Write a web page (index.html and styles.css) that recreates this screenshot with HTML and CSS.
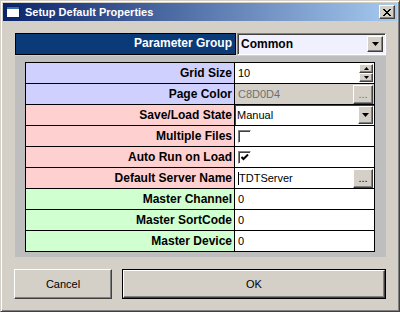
FILE: index.html
```html
<!doctype html>
<html lang="en">
<head>
    <meta charset="utf-8">
    <title>Setup Default Properties</title>
    <link rel="stylesheet" href="styles.css">
</head>
<body>
    <div class="window">
        <div class="titlebar">
            <svg class="app-icon" width="14" height="12" viewBox="0 0 14 12">
                <rect x="0.5" y="0.5" width="13" height="11" fill="#ffffff" stroke="#0a246a"/>
                <rect x="1" y="1" width="12" height="2" fill="#3a6ea5"/>
            </svg>
            <span class="title">Setup Default Properties</span>
            <div class="close raised">
                <svg width="8" height="7" viewBox="0 0 8 7">
                    <path d="M0 0 L7 7 M1 0 L8 7 M7 0 L0 7 M8 0 L1 7" stroke="#000" stroke-width="1"/>
                </svg>
            </div>
        </div>

        <div class="client">
            <div class="group-row">
                <div class="group-label">Parameter Group</div>
                <div class="group-combo sunken">
                    <span class="combo-text">Common</span>
                    <div class="drop raised">
                        <svg width="7" height="4" viewBox="0 0 7 4"><path d="M0 0 H7 L3.5 4 Z" fill="#000"/></svg>
                    </div>
                </div>
            </div>

            <div class="panel">
                <div class="props">
                    <div class="prop blue">
                        <div class="label">Grid Size</div>
                        <div class="value">
                            <span class="text">10</span>
                            <div class="spin">
                                <div class="spin-btn raised"><svg width="5" height="3" viewBox="0 0 5 3"><path d="M2.5 0 L5 3 H0 Z" fill="#000"/></svg></div>
                                <div class="spin-btn raised"><svg width="5" height="3" viewBox="0 0 5 3"><path d="M0 0 H5 L2.5 3 Z" fill="#000"/></svg></div>
                            </div>
                        </div>
                    </div>
                    <div class="prop blue">
                        <div class="label">Page Color</div>
                        <div class="value disabled">
                            <span class="text">C8D0D4</span>
                            <div class="dots raised">...</div>
                        </div>
                    </div>
                    <div class="prop red">
                        <div class="label">Save/Load State</div>
                        <div class="value combo">
                            <span class="text">Manual</span>
                            <div class="drop raised">
                                <svg width="7" height="4" viewBox="0 0 7 4"><path d="M0 0 H7 L3.5 4 Z" fill="#000"/></svg>
                            </div>
                        </div>
                    </div>
                    <div class="prop red">
                        <div class="label">Multiple Files</div>
                        <div class="value">
                            <div class="check sunken"></div>
                        </div>
                    </div>
                    <div class="prop red">
                        <div class="label">Auto Run on Load</div>
                        <div class="value">
                            <div class="check sunken">
                                <svg width="8" height="7" viewBox="0 0 8 7"><path d="M0.5 3 L2.5 5 L7 0.5" fill="none" stroke="#000" stroke-width="2"/></svg>
                            </div>
                        </div>
                    </div>
                    <div class="prop red">
                        <div class="label">Default Server Name</div>
                        <div class="value">
                            <span class="caret"></span><span class="text">TDTServer</span>
                            <div class="dots raised">...</div>
                        </div>
                    </div>
                    <div class="prop green">
                        <div class="label">Master Channel</div>
                        <div class="value"><span class="text">0</span></div>
                    </div>
                    <div class="prop green">
                        <div class="label">Master SortCode</div>
                        <div class="value"><span class="text">0</span></div>
                    </div>
                    <div class="prop green">
                        <div class="label">Master Device</div>
                        <div class="value"><span class="text">0</span></div>
                    </div>
                </div>
            </div>

            <div class="actions">
                <div class="btn raised">Cancel</div>
                <div class="btn default"><div class="btn-inner raised">OK</div></div>
            </div>
        </div>
    </div>
</body>
</html>
```

FILE: styles.css
```css
body {
    margin: 0;
    background: #d4d0c8;
    font-family: "Liberation Sans", Arial, sans-serif;
    font-size: 11px;
    color: #000;
}

.window {
    box-sizing: border-box;
    width: 400px;
    height: 312px;
    padding: 2px;
    background: #d4d0c8;
    border: 1px solid;
    border-color: #d4d0c8 #404040 #404040 #d4d0c8;
    box-shadow: inset 1px 1px #ffffff, inset -1px -1px #808080;
}

.raised {
    box-sizing: border-box;
    background: #d4d0c8;
    border: 1px solid;
    border-color: #ffffff #404040 #404040 #ffffff;
    box-shadow: inset -1px -1px #808080;
}

.sunken {
    box-sizing: border-box;
    border: 1px solid;
    border-color: #808080 #ffffff #ffffff #808080;
    box-shadow: inset 1px 1px #404040;
}

/* title bar */
.titlebar {
    height: 18px;
    display: flex;
    align-items: center;
    background: linear-gradient(to right, #0a246a, #a6caf0);
    color: #fff;
}

.app-icon {
    margin-left: 3px;
    margin-right: 5px;
}

.title {
    font-weight: bold;
    flex: 1;
}

.close {
    width: 16px;
    height: 14px;
    margin-right: 2px;
    display: flex;
    align-items: center;
    justify-content: center;
}

/* client area */
.client {
    padding: 12px 11px 0 12px;
}

.group-row {
    display: flex;
    height: 22px;
}

.group-label {
    box-sizing: border-box;
    width: 221px;
    border: 1px solid #000;
    background: #0a3a78;
    color: #fff;
    font-weight: bold;
    font-size: 12px;
    text-align: right;
    padding-right: 3px;
    line-height: 19px;
}

.group-combo {
    flex: 1;
    margin-left: 1px;
    background: #f0f0ff;
    display: flex;
    align-items: center;
    padding: 2px;
}

.combo-text {
    flex: 1;
    font-weight: bold;
    font-size: 12px;
    padding-left: 1px;
}

.drop {
    width: 16px;
    height: 16px;
    display: flex;
    align-items: center;
    justify-content: center;
}

/* property grid */
.panel {
    margin-top: 1px;
    height: 201px;
    box-sizing: border-box;
    padding: 6px 11px 5px 10px;
    background: #bebebe;
}

.props {
    box-sizing: border-box;
    width: 350px;
    border: 1px solid #000;
}

.prop {
    display: grid;
    grid-template-columns: 209px 1fr;
    height: 20px;
}

.prop + .prop {
    border-top: 1px solid #000;
}

.prop.blue .label { background: #d0d0ff; }
.prop.red .label { background: #ffd0d0; }
.prop.green .label { background: #d0ffd0; }

.label {
    border-right: 1px solid #000;
    font-weight: bold;
    font-size: 12px;
    text-align: right;
    padding-right: 2px;
    line-height: 20px;
}

.value {
    background: #fff;
    display: flex;
    align-items: center;
    padding-left: 3px;
    padding-right: 1px;
}

.value .text {
    flex: 1;
}

.value.disabled {
    background: #d4d0c8;
    color: #707070;
}

.value.combo {
    box-shadow: inset 1px 1px #404040;
    padding-left: 2px;
}

.value.combo .drop {
    height: 18px;
    width: 15px;
}

.spin {
    width: 14px;
    height: 18px;
    display: flex;
    flex-direction: column;
}

.spin-btn {
    height: 9px;
    display: flex;
    align-items: center;
    justify-content: center;
}

.dots {
    width: 20px;
    height: 19px;
    text-align: center;
    line-height: 17px;
}

.check {
    width: 13px;
    height: 13px;
    background: #fff;
    display: flex;
    align-items: center;
    justify-content: center;
}

.caret {
    width: 1px;
    height: 13px;
    background: #000;
}

/* buttons */
.actions {
    display: flex;
    gap: 10px;
    margin-top: 12px;
    margin-left: -1px;
}

.btn {
    width: 98px;
    height: 30px;
    display: flex;
    align-items: center;
    justify-content: center;
}

.btn.default {
    flex: 1;
    box-sizing: border-box;
    border: 1px solid #000;
}

.btn-inner {
    width: 100%;
    height: 100%;
    display: flex;
    align-items: center;
    justify-content: center;
}
```
